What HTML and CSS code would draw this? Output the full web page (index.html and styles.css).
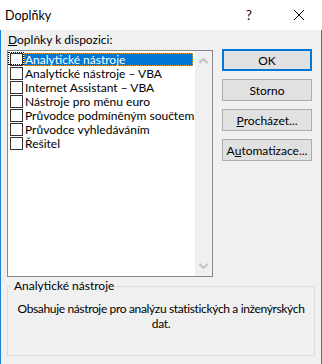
FILE: index.html
```html
<!DOCTYPE html>
<html>
<head>
<meta charset="utf-8">
<link rel="stylesheet" href="styles.css">
</head>
<body>
<div class="window">
  <div class="titlebar">
    <span class="title">Doplňky</span>
    <span class="help">?</span>
    <span class="close"><svg width="12" height="12" viewBox="0 0 12 12"><path d="M1 1 L11 11 M11 1 L1 11" stroke="#000" stroke-width="1" fill="none"/></svg></span>
  </div>
  <div class="client">
    <div class="top">
      <div class="left">
        <div class="label"><u>D</u>oplňky k dispozici:</div>
        <div class="list">
          <div class="items">
            <div class="row focus"><span class="cb"></span><span class="txt sel">Analytické nástroje</span></div>
            <div class="row"><span class="cb"></span><span class="txt">Analytické nástroje – VBA</span></div>
            <div class="row"><span class="cb"></span><span class="txt">Internet Assistant – VBA</span></div>
            <div class="row"><span class="cb"></span><span class="txt">Nástroje pro měnu euro</span></div>
            <div class="row"><span class="cb"></span><span class="txt">Průvodce podmíněným součtem</span></div>
            <div class="row"><span class="cb"></span><span class="txt">Průvodce vyhledáváním</span></div>
            <div class="row"><span class="cb"></span><span class="txt">Řešitel</span></div>
          </div>
          <div class="scroll">
            <svg class="arr" width="9" height="6" viewBox="0 0 9 6"><path d="M0.5 5 L4.5 1 L8.5 5" stroke="#c2c2c2" stroke-width="2" fill="none"/></svg>
            <svg class="arr" width="9" height="6" viewBox="0 0 9 6"><path d="M0.5 1 L4.5 5 L8.5 1" stroke="#c2c2c2" stroke-width="2" fill="none"/></svg>
          </div>
        </div>
      </div>
      <div class="buttons">
        <div class="btn default">OK</div>
        <div class="btn">Storno</div>
        <div class="btn"><u>P</u>rocházet...</div>
        <div class="btn">A<u>u</u>tomatizace...</div>
      </div>
    </div>
    <div class="group">
      <div class="legend">Analytické nástroje</div>
      <div class="desc">Obsahuje nástroje pro analýzu statistických a inženýrských dat.</div>
    </div>
  </div>
</div>
</body>
</html>
```
FILE: styles.css
```css
html, body {
  margin: 0;
  padding: 0;
}
body {
  font-family: Lato, "Noto Sans", sans-serif;
  font-size: 12px;
  color: #000;
}
.window {
  width: 322px;
  height: 364px;
  display: flex;
  flex-direction: column;
  overflow: hidden;
}
.titlebar {
  height: 30px;
  background: #fff;
  display: flex;
  align-items: center;
}
.title {
  margin-left: 5px;
  font-size: 12.5px;
  line-height: 15px;
  flex: 1;
}
.help {
  width: 12px;
  margin-right: 35px;
  font-size: 13px;
  line-height: 15px;
}
.close {
  width: 12px;
  height: 12px;
  margin-right: 17px;
  display: flex;
}
.client {
  flex: 1;
  background: #f0f0f0;
  border-left: 1px solid #1883d7;
  border-right: 1px solid #1883d7;
  display: flex;
  flex-direction: column;
  padding: 2px 6px 0 6px;
}
.top {
  display: flex;
}
.left {
  width: 206px;
  display: flex;
  flex-direction: column;
}
.label {
  line-height: 15px;
  height: 18px;
  padding-left: 1px;
}
.list {
  height: 225px;
  border: 1px solid #828790;
  background: #fff;
  display: flex;
}
.items {
  flex: 1;
  padding-top: 1px;
}
.row {
  height: 14px;
  display: flex;
  align-items: center;
  position: relative;
  padding-left: 2px;
}
.row.focus::before {
  content: "";
  position: absolute;
  left: 0;
  top: 0;
  width: 16px;
  height: 13px;
  border: 1px dotted #000;
  box-sizing: border-box;
}
.cb {
  width: 13px;
  height: 13px;
  box-sizing: border-box;
  border: 1px solid #333;
  background: #fff;
  margin-right: 1px;
  flex: none;
}
.txt {
  line-height: 13px;
  height: 13px;
  padding: 0 1px;
  white-space: nowrap;
}
.txt.sel {
  background: #0078d7;
  color: #fff;
  outline: 1px dotted #f0a020;
  outline-offset: -1px;
  flex: 1;
  margin-right: 2px;
}
.scroll {
  width: 17px;
  background: #f0f0f0;
  display: flex;
  flex-direction: column;
  justify-content: space-between;
  align-items: center;
  padding: 7px 0 7px 0;
}
.buttons {
  margin-left: 9px;
  padding-top: 17px;
  display: flex;
  flex-direction: column;
  gap: 8px;
}
.btn {
  width: 90px;
  height: 22px;
  box-sizing: border-box;
  border: 1px solid #adadad;
  background: #e1e1e1;
  display: flex;
  align-items: center;
  justify-content: center;
  line-height: 15px;
}
.btn.default {
  border: 2px solid #0078d7;
}
.group {
  margin-top: 9px;
  height: 70px;
  border: 1px solid #dcdcdc;
  width: 308px;
  box-sizing: border-box;
  position: relative;
}
.legend {
  position: absolute;
  top: -9px;
  left: 4px;
  background: #f0f0f0;
  padding: 0 2px;
  line-height: 15px;
}
.desc {
  text-align: center;
  padding: 14px 2px 0 2px;
  line-height: 15px;
  letter-spacing: -0.35px;
}
```
